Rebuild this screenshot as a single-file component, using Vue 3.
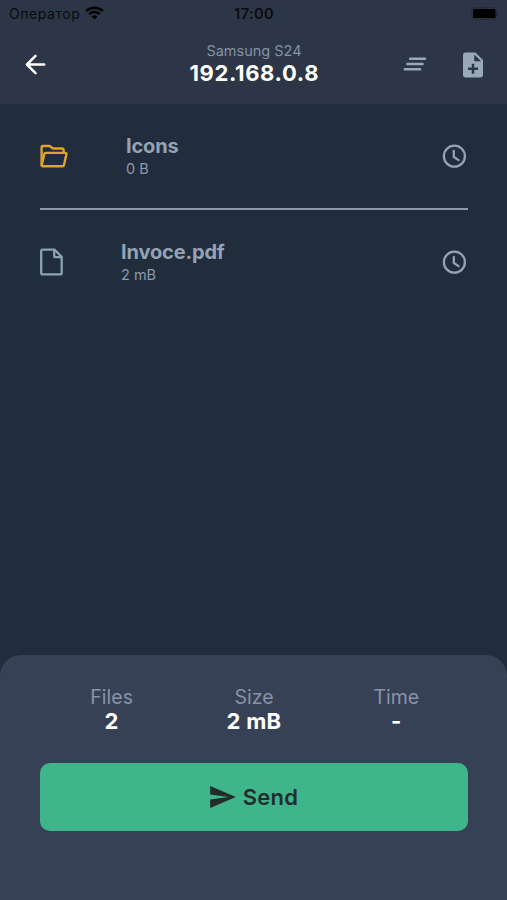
<script setup>
const files = [
  { name: 'Icons', size: '0 B', kind: 'folder' },
  { name: 'Invoce.pdf', size: '2 mB', kind: 'file' },
]
const stats = [
  { label: 'Files', value: '2' },
  { label: 'Size', value: '2 mB' },
  { label: 'Time', value: '-' },
]
</script>

<template>
  <div class="screen">
    <header class="top">
      <div class="status">
        <div class="carrier">
          <span class="operator">Оператор</span>
          <svg class="wifi" viewBox="0 0 19 14">
            <path d="M1.2 5A12 12 0 0 1 17.8 5" />
            <path d="M4.2 8.1A7.7 7.7 0 0 1 14.8 8.1" />
            <path class="dot" d="M6.6 10.6A4.2 4.2 0 0 1 12.4 10.6L9.5 13.6Z" />
          </svg>
        </div>
        <span class="clock">17:00</span>
        <svg class="battery" viewBox="0 0 28 13">
          <rect class="shell" x="0.7" y="0.7" width="24.6" height="11.6" rx="3.2" />
          <rect x="2" y="2" width="22.5" height="9" rx="1.5" />
          <path class="tip" d="M26.3 4.4Q27.8 6.5 26.3 8.6Z" />
        </svg>
      </div>
      <div class="bar">
        <button class="icon-btn" aria-label="Back">
          <svg class="back" viewBox="0 0 24 24"><path d="M19.2 12H5.2M12 4.9 4.9 12 12 19.1" /></svg>
        </button>
        <div class="title">
          <span class="device">Samsung S24</span>
          <span class="address">192.168.0.8</span>
        </div>
        <div class="actions">
          <button class="icon-btn" aria-label="Clear">
            <svg class="clear" viewBox="0 0 24 14"><path d="M7.1 1.8H22M4.4 7H19.6M1.8 12.2H17.1" /></svg>
          </button>
          <button class="icon-btn" aria-label="Add file">
            <svg class="add" viewBox="0 0 24 24">
              <path d="M14 2H6c-1.1 0-1.99.9-1.99 2L4 20c0 1.1.89 2 1.99 2H18c1.1 0 2-.9 2-2V8l-6-6zm2 14h-3v3h-2v-3H8v-2h3v-3h2v3h3v2zm-3-7V3.5L18.5 9H13z" />
            </svg>
          </button>
        </div>
      </div>
    </header>

    <main class="list">
      <div v-for="f in files" :key="f.name" class="row">
        <svg v-if="f.kind === 'folder'" class="folder" viewBox="0 0 28 24">
          <path d="M1.6 21V3.2Q1.6 2 2.8 2H9Q9.9 2 10.6 2.6L12.2 4Q12.8 4.5 13.6 4.5H22Q23.6 4.5 23.6 6V8.8" />
          <path d="M5.8 8.9H25.2Q26.7 8.9 26.4 10.3L24 21Q23.8 22.2 22.6 22.2H2.8Q1.5 22.2 1.8 21L4.3 10Q4.6 8.9 5.8 8.9Z" />
        </svg>
        <svg v-else class="file" viewBox="0 0 23 28">
          <path d="M2.6 1.6H14.4L21.7 8.8V25Q21.7 26.4 20.3 26.4H2.6Q1.2 26.4 1.2 25V3Q1.2 1.6 2.6 1.6Z" />
          <path d="M14.2 2V7.8Q14.2 9.2 15.6 9.2H21.3" />
        </svg>
        <div class="info">
          <span class="name">{{ f.name }}</span>
          <span class="size">{{ f.size }}</span>
        </div>
        <svg class="pending" viewBox="0 0 24 24">
          <circle cx="12.4" cy="12.2" r="10.5" />
          <path d="M11.8 6.8V13L16.6 16.1" />
        </svg>
      </div>
    </main>

    <footer class="sheet">
      <div class="stats">
        <div v-for="s in stats" :key="s.label" class="stat">
          <span class="label">{{ s.label }}</span>
          <span class="value">{{ s.value }}</span>
        </div>
      </div>
      <button class="send">
        <svg viewBox="0 0 21 18"><path d="M.01 18 21 9 .01 0 0 7l15 2-15 2z" /></svg>
        <span>Send</span>
      </button>
    </footer>
  </div>
</template>

<style>
body {
  margin: 0;
  background: #212d3d;
}
</style>

<style scoped>
.screen {
  display: flex;
  flex-direction: column;
  width: 507px;
  height: 900px;
  overflow: hidden;
  background: #212d3d;
  font-family: Inter, "Liberation Sans", sans-serif;
}
button {
  border: 0;
  padding: 0;
  margin: 0;
  background: none;
  font: inherit;
}
svg {
  display: block;
  flex: none;
}
.top {
  height: 104px;
  flex: none;
  background: #2d3647;
}
.status {
  display: grid;
  grid-template-columns: 1fr auto 1fr;
  align-items: center;
  height: 27px;
  padding: 0 8px 0 9px;
  color: #080b10;
}
.carrier {
  display: flex;
  align-items: center;
  gap: 5px;
}
.operator {
  font-size: 14px;
  line-height: 27px;
  letter-spacing: 0.55px;
}
.wifi {
  width: 19px;
  height: 14px;
  margin-top: -1px;
  fill: none;
  stroke: #000;
  stroke-width: 2.5;
}
.wifi .dot {
  fill: #000;
  stroke: none;
}
.clock {
  font-size: 14.5px;
  font-weight: 600;
  letter-spacing: 0.4px;
}
.battery {
  width: 28px;
  height: 13px;
  justify-self: end;
}
.battery .shell {
  fill: none;
  stroke: #222936;
  stroke-width: 1;
}
.battery .tip {
  fill: #1c222d;
}
.bar {
  display: grid;
  grid-template-columns: 1fr auto 1fr;
  align-items: center;
  height: 74px;
  padding: 0 19.5px 0 20.5px;
}
.back {
  width: 29px;
  height: 29px;
  fill: none;
  stroke: #fff;
  stroke-width: 2.1;
  stroke-linecap: round;
  stroke-linejoin: round;
}
.title {
  display: flex;
  flex-direction: column;
  align-items: center;
}
.device {
  font-size: 14.5px;
  line-height: 18px;
  color: #8391a3;
}
.address {
  font-size: 22px;
  line-height: 26px;
  font-weight: 700;
  letter-spacing: 0.65px;
  margin-right: -0.65px;
  color: #fff;
}
.actions {
  display: flex;
  align-items: center;
  justify-content: flex-end;
  gap: 31px;
}
.clear {
  width: 24px;
  height: 14px;
  fill: none;
  stroke: #9aa9b8;
  stroke-width: 2.4;
  stroke-linecap: round;
}
.add {
  width: 30px;
  height: 30px;
  margin-top: 1px;
  fill: #9aa9b8;
}
.list {
  flex: 1;
  padding: 0 39.5px;
}
.row {
  display: flex;
  align-items: center;
  height: 104px;
}
.row + .row {
  border-top: 2px solid #8e99ab;
}
.folder,
.file,
.pending {
  fill: none;
  stroke-linejoin: round;
  stroke-linecap: round;
}
.folder {
  width: 28px;
  height: 24px;
  stroke: #dda52b;
  stroke-width: 2.4;
}
.file {
  width: 23px;
  height: 28px;
  stroke: #8ba3b2;
  stroke-width: 2.3;
}
.info {
  display: flex;
  flex: 1;
  flex-direction: column;
  margin-left: 58.5px;
  padding-top: 2px;
}
.name {
  font-size: 20px;
  line-height: 23px;
  font-weight: 700;
  letter-spacing: -0.15px;
  color: #94a2b3;
}
.size {
  font-size: 14.5px;
  line-height: 21px;
  color: #8b99ab;
}
.pending {
  width: 24px;
  height: 24px;
  margin-right: 1.5px;
  overflow: visible;
  stroke: #94a2b3;
  stroke-width: 2.3;
}
.sheet {
  display: flex;
  flex-direction: column;
  height: 245px;
  flex: none;
  box-sizing: border-box;
  padding: 30px 39.5px 0;
  border-radius: 21px 21px 0 0;
  background: #374155;
}
.stats {
  display: grid;
  grid-template-columns: repeat(3, 1fr);
  padding-left: 1px;
}
.stat {
  display: flex;
  flex-direction: column;
  align-items: center;
}
.label {
  font-size: 19.5px;
  line-height: 24px;
  color: #8794a7;
}
.value {
  font-size: 22px;
  line-height: 25px;
  font-weight: 700;
  letter-spacing: 0.3px;
  color: #fff;
}
.send {
  display: flex;
  align-items: center;
  justify-content: center;
  gap: 7px;
  height: 68px;
  margin-top: 29.4px;
  padding-left: 1px;
  border-radius: 10px;
  background: #3fb58b;
  color: #232e2c;
  font-size: 22px;
  font-weight: 600;
  letter-spacing: 0.2px;
}
.send svg {
  width: 26px;
  height: 22px;
  fill: #252b2b;
}
</style>
